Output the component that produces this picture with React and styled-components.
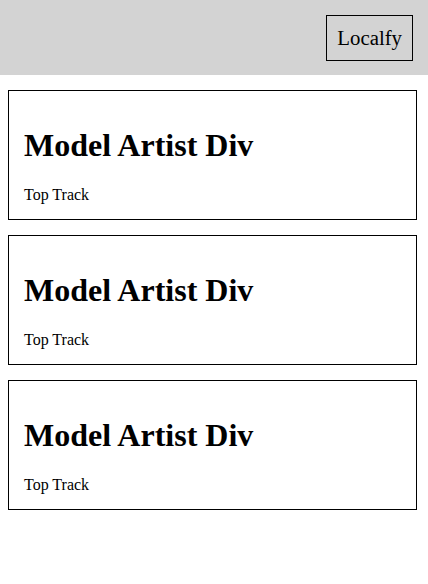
import React from "react";
import styled, { createGlobalStyle } from "styled-components";

const artists = [
    { id: 1, name: "Model Artist Div", track: "Top Track" },
    { id: 2, name: "Model Artist Div", track: "Top Track" },
    { id: 3, name: "Model Artist Div", track: "Top Track" },
];

function App() {
    return (
        <>
            <GlobalStyle />
            <Header>
                <Brand>Localfy</Brand>
            </Header>
            <MainContainer>
                {artists.map((artist) => (
                    <ArtistCard key={artist.id}>
                        <ArtistName>{artist.name}</ArtistName>
                        <TopTrack>{artist.track}</TopTrack>
                    </ArtistCard>
                ))}
            </MainContainer>
        </>
    );
}

// Styled components
const GlobalStyle = createGlobalStyle`
    body {
        margin: 0;
        background: #fff;
        font-family: "Liberation Serif", "Times New Roman", serif;
        color: #000;
    }
`;
const Header = styled.header`
    display: flex;
    justify-content: flex-end;
    align-items: flex-start;
    height: 75px;
    box-sizing: border-box;
    padding: 15px 15px 0;
    background: lightgray;
`;
const Brand = styled.div`
    font-size: 1.3rem;
    padding: 10px;
    border: 1px solid #000;
    line-height: 24px;
`;
const MainContainer = styled.main`
    display: flex;
    flex-direction: column;
    gap: 15px;
    padding: 15px 8px;
`;
const ArtistCard = styled.div`
    width: 409px;
    box-sizing: border-box;
    padding: 15px;
    border: 1px solid #000;
`;
const ArtistName = styled.h1`
    font-size: 32px;
    margin: 21.44px 0;
`;
const TopTrack = styled.p`
    font-size: 16px;
    margin: 0;
`;

export default App;
